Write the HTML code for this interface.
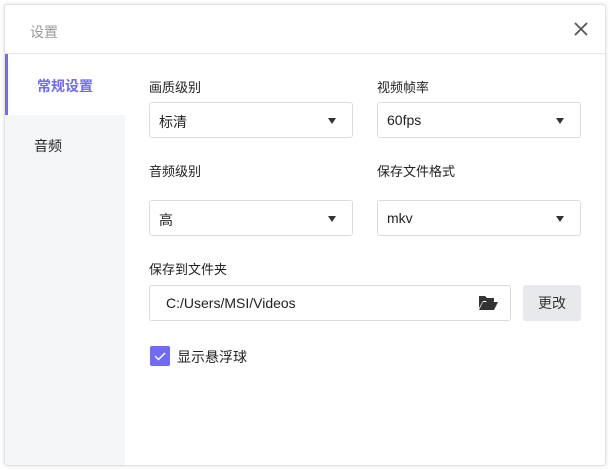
<!DOCTYPE html>
<html><head><meta charset="utf-8"><style>
*{margin:0;padding:0;box-sizing:border-box}
body{width:610px;height:470px;background:#fff;font-family:"Liberation Sans","Noto Sans CJK SC",sans-serif;position:relative;overflow:hidden}
.dlg{position:absolute;left:4px;top:4px;width:602px;height:462px;border:1px solid #e2e2e2;border-radius:3px;box-shadow:0 0 4px rgba(0,0,0,.12);background:#fff;overflow:hidden}
.hdr{position:absolute;left:0;top:0;width:100%;height:49px;border-bottom:1px solid #e6e6e6}
.t{position:absolute;left:25px;top:17px;font-size:14px;color:#999}
.side{position:absolute;left:0;top:49px;width:120px;bottom:0;background:#f5f6f8}
.act{position:absolute;left:0;top:0;width:120px;height:61px;background:#fff;border-left:3px solid #6f6af8}
.s{position:absolute;font-size:14px}
.lab{position:absolute;font-size:13px;color:#222}
.sel{position:absolute;height:36px;border:1px solid #dcdcdc;border-radius:3px;font-size:14px;color:#222;padding:9px 0 0 9px}
.sel:after{content:"";position:absolute;right:16px;top:15px;border-left:4.5px solid transparent;border-right:4.5px solid transparent;border-top:6px solid #333}
</style></head><body>
<div class="dlg">
<div class="hdr"><div class="t">设置</div>
<svg style="position:absolute;right:17px;top:17px" width="14" height="14"><path d="M1 1L13 13M13 1L1 13" stroke="#555" stroke-width="1.8"/></svg></div>
<div class="side"><div class="act"></div>
<div class="s" style="left:32px;top:22px;color:#6f6af8;font-weight:bold">常规设置</div>
<div class="s" style="left:29px;top:82px;color:#222">音频</div></div>
</div>
<div class="lab" style="left:149px;top:77px">画质级别</div>
<div class="lab" style="left:377px;top:77px">视频帧率</div>
<div class="sel" style="left:149px;top:102px;width:204px">标清</div>
<div class="sel" style="left:377px;top:102px;width:204px">60fps</div>
<div class="lab" style="left:149px;top:161px">音频级别</div>
<div class="lab" style="left:377px;top:161px">保存文件格式</div>
<div class="sel" style="left:149px;top:200px;width:204px">高</div>
<div class="sel" style="left:377px;top:200px;width:204px">mkv</div>
<div class="lab" style="left:149px;top:259px">保存到文件夹</div>
<div class="sel" style="left:149px;top:285px;width:362px;padding-left:16px">C:/Users/MSI/Videos</div>
<svg style="position:absolute;left:479px;top:295px" width="19" height="15" viewBox="0 0 19 15"><path d="M0 1h6l2 2h7v3H4L0 13Z" fill="#333"/><path d="M4 7h15l-4 8H0Z" fill="#333"/></svg>
<div style="position:absolute;left:523px;top:285px;width:58px;height:36px;background:#e7e9ec;border-radius:3px;font-size:14px;color:#333;text-align:center;line-height:36px">更改</div>
<div style="position:absolute;left:150px;top:346px;width:20px;height:20px;background:#6f6af8;border-radius:2px"><svg width="20" height="20"><path d="M5 10l3.5 3.5L15 7" stroke="#fff" stroke-width="1.5" fill="none"/></svg></div>
<div class="s" style="left:177px;top:347px;color:#222">显示悬浮球</div>
</body></html>
